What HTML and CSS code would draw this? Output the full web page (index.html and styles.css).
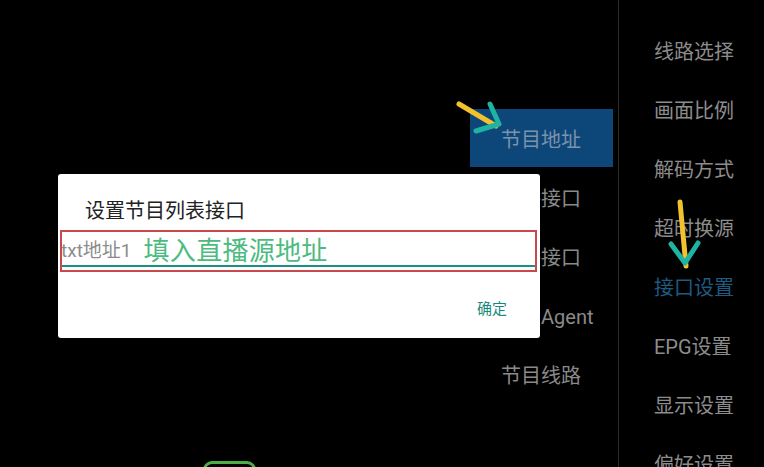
FILE: index.html
```html
<!DOCTYPE html>
<html lang="zh">
<head>
<meta charset="utf-8">
<title>设置</title>
<link rel="stylesheet" href="styles.css">
</head>
<body>
<div class="screen">
  <div class="main">
    <ul class="midcol">
      <li class="mid-item active">节目地址</li>
      <li class="mid-item">直播接口</li>
      <li class="mid-item">点播接口</li>
      <li class="mid-item">设置Agent</li>
      <li class="mid-item">节目线路</li>
    </ul>
  </div>
  <div class="divider"></div>
  <ul class="side">
    <li class="side-item">线路选择</li>
    <li class="side-item">画面比例</li>
    <li class="side-item">解码方式</li>
    <li class="side-item">超时换源</li>
    <li class="side-item current">接口设置</li>
    <li class="side-item">EPG设置</li>
    <li class="side-item">显示设置</li>
    <li class="side-item">偏好设置</li>
  </ul>

  <div class="dialog">
    <div class="dialog-title">设置节目列表接口</div>
    <div class="input-box">
      <div class="field">
        <span class="hint">txt地址1</span>
        <span class="note">填入直播源地址</span>
      </div>
    </div>
    <div class="actions">
      <span class="btn">确定</span>
    </div>
  </div>

  <div class="green-mark"></div>

  <svg class="annot" width="764" height="467" viewBox="0 0 764 467">
    <line x1="459" y1="104" x2="496" y2="126" stroke="#f2c12e" stroke-width="5" stroke-linecap="round"/>
    <polyline points="490,104 499,124 476,131" fill="none" stroke="#1fb3a3" stroke-width="5" stroke-linecap="round" stroke-linejoin="round"/>
    <line x1="680" y1="202" x2="686" y2="266" stroke="#f2c12e" stroke-width="5" stroke-linecap="round"/>
    <polyline points="671,244 685,263 698,243" fill="none" stroke="#1fb3a3" stroke-width="5" stroke-linecap="round" stroke-linejoin="round"/>
  </svg>
</div>
</body>
</html>
```

FILE: styles.css
```css
* { box-sizing: border-box; }
html, body { margin: 0; padding: 0; background: #000; }
body {
  font-family: Roboto, "Noto Sans CJK SC", sans-serif;
  overflow: hidden;
}
ul { list-style: none; margin: 0; padding: 0; }

.screen {
  position: relative;
  width: 764px;
  height: 467px;
  display: flex;
  background: #000;
  overflow: hidden;
}

.main {
  width: 618px;
  display: flex;
  justify-content: flex-end;
}

.midcol {
  width: 143px;
  margin-right: 5px;
  padding-top: 109px;
}

.mid-item {
  height: 59px;
  padding-top: 4px;
  line-height: 55px;
  padding-left: 31px;
  font-size: 20px;
  color: #8a8a8a;
  white-space: nowrap;
}
.mid-item.active {
  height: 58px;
  line-height: 54px;
  margin-bottom: 1px;
  background: #0d4679;
  color: #7b93ab;
}

.divider {
  width: 1px;
  background: #2a2a2a;
}

.side {
  flex: 1;
  padding-top: 23px;
  padding-left: 35px;
}
.side-item {
  height: 59px;
  line-height: 59px;
  font-size: 20px;
  color: #8c8c8c;
  white-space: nowrap;
}
.side-item.current { color: #1f5a80; }

.dialog {
  position: absolute;
  left: 58px;
  top: 174px;
  width: 482px;
  height: 164px;
  background: #fff;
  border-radius: 3px;
  padding-top: 23px;
}
.dialog-title {
  padding-left: 27px;
  font-size: 20px;
  line-height: 28px;
  color: #222;
}
.input-box {
  margin: 5px 0 0 2px;
  width: 477px;
  height: 42px;
  border: 2px solid #c9484d;
  padding-bottom: 3px;
}
.field {
  height: 35px;
  border-bottom: 2px solid #1b8f80;
  display: flex;
  align-items: center;
  overflow: hidden;
  white-space: nowrap;
}
.hint {
  font-size: 19px;
  color: #8c8c8c;
  margin-left: -1px;
}
.note {
  margin-left: 12px;
  font-size: 26px;
  letter-spacing: 0.3px;
  color: #4cbb7f;
}
.actions {
  display: flex;
  justify-content: flex-end;
  padding-right: 33px;
  margin-top: 27px;
}
.btn {
  font-size: 15px;
  line-height: 20px;
  color: #178a7a;
}

.green-mark {
  position: absolute;
  left: 203px;
  top: 461px;
  width: 53px;
  height: 30px;
  border: 3px solid #4cae45;
  border-radius: 9px;
}

.annot {
  position: absolute;
  left: 0;
  top: 0;
  pointer-events: none;
}
```
